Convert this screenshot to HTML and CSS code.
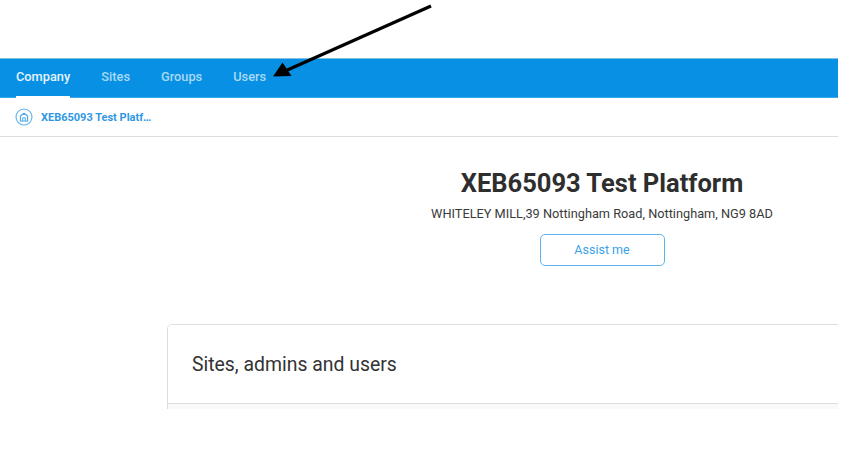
FILE: index.html
```html
<!DOCTYPE html>
<html lang="en">
<head>
<meta charset="utf-8">
<title>XEB65093 Test Platform</title>
<link rel="stylesheet" href="styles.css">
</head>
<body>
<div class="page">
  <div class="top-space"></div>
  <nav class="tabs">
    <a class="tab active">Company</a>
    <a class="tab">Sites</a>
    <a class="tab">Groups</a>
    <a class="tab">Users</a>
  </nav>
  <div class="crumb">
    <span class="crumb-icon">
      <svg width="18" height="18" viewBox="0 0 18 18" fill="none">
        <circle cx="9" cy="9" r="8" stroke="#5fb4ee" stroke-width="1.1"/>
        <path d="M5.4 13V8L9 5.2 12.6 8V13Z" stroke="#4aa8ea" stroke-width="1.1" stroke-linejoin="round"/>
        <path d="M7.7 13V9.8H10.3V13" stroke="#4aa8ea" stroke-width="1"/>
      </svg>
    </span>
    <span class="crumb-text">XEB65093 Test Platf…</span>
  </div>
  <main class="main">
    <section class="hero">
      <h1 class="title">XEB65093 Test Platform</h1>
      <p class="address">WHITELEY MILL,39 Nottingham Road, Nottingham, NG9 8AD</p>
      <button class="assist">Assist me</button>
    </section>
    <section class="card">
      <h2 class="card-title">Sites, admins and users</h2>
    </section>
  </main>
</div>
<svg class="arrow" width="862" height="100" viewBox="0 0 862 100">
  <path d="M431 6L284 71.500" stroke="#000" stroke-width="3.200" fill="none"/>
  <path d="M273 76.500L291.500 76L282.500 62.500Z" fill="#000"/>
</svg>
</body>
</html>
```
FILE: styles.css
```css
html, body {
  margin: 0;
  padding: 0;
  background: #fff;
}
body {
  position: relative;
  width: 862px;
  height: 457px;
  overflow: hidden;
  font-family: Roboto, "Liberation Sans", sans-serif;
}
.page {
  width: 838px;
  height: 409px;
  overflow: hidden;
  display: flex;
  flex-direction: column;
}
.top-space {
  height: 58px;
  flex: none;
}
.tabs {
  flex: none;
  height: 40px;
  box-sizing: border-box;
  background: #0891e4;
  border-top: 1px solid #7fbfe6;
  border-bottom: 1px solid #3aa9ee;
  display: flex;
  gap: 31px;
  padding-left: 16px;
}
.tab {
  position: relative;
  display: flex;
  align-items: center;
  padding-bottom: 3px;
  font-size: 12.800px;
  font-weight: 500;
  color: #a9d9f6;
}
.tab.active {
  color: #e6f4fd;
}
.tab.active::after {
  content: "";
  position: absolute;
  left: 0;
  right: 0;
  bottom: -1px;
  height: 2px;
  background: #fff;
}
.crumb {
  flex: none;
  height: 39px;
  box-sizing: border-box;
  border-bottom: 1px solid #dedede;
  display: flex;
  align-items: center;
  gap: 8px;
  padding: 0 0 0 15px;
}
.crumb-icon {
  display: flex;
}
.crumb-text {
  font-size: 11px;
  font-weight: 700;
  color: #2f97e4;
}
.main {
  flex: 1;
  display: flex;
  flex-direction: column;
  padding-left: 167px;
  width: 870px;
}
.hero {
  display: flex;
  flex-direction: column;
  align-items: center;
  width: 870px;
  height: 187px;
  flex: none;
}
.title {
  margin: 31px 0 0;
  font-size: 25.500px;
  line-height: 30px;
  font-weight: 700;
  color: #2e2e2e;
}
.address {
  margin: 8px 0 0;
  font-size: 12.750px;
  line-height: 16px;
  color: #3a3a3a;
}
.assist {
  margin-top: 12px;
  width: 125px;
  height: 32px;
  padding: 0 0 1px;
  box-sizing: border-box;
  background: #fff;
  border: 1px solid #5db3ee;
  border-radius: 5px;
  font-family: inherit;
  font-size: 12.500px;
  color: #3a9fe8;
}
.card {
  width: 870px;
  height: 120px;
  flex: none;
  box-sizing: border-box;
  overflow: hidden;
  background: #f9f9f9;
  border: 1px solid #dedede;
  border-radius: 5px 0 0 0;
}
.card-title {
  margin: 0;
  height: 79px;
  box-sizing: border-box;
  padding: 0 0 0 24px;
  display: flex;
  align-items: center;
  background: #fff;
  font-size: 19.400px;
  font-weight: 400;
  color: #333;
  border-bottom: 1px solid #dedede;
}
.arrow {
  position: absolute;
  left: 0;
  top: 0;
  pointer-events: none;
}
```
